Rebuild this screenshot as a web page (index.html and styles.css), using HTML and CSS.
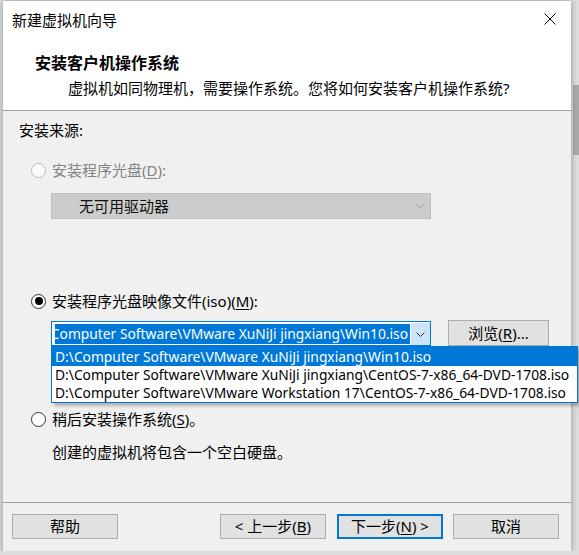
FILE: index.html
```html
<!DOCTYPE html>
<html lang="zh-CN">
  <head>
    <meta charset="UTF-8" />
    <meta name="viewport" content="width=device-width, initial-scale=1.0" />
    <link rel="stylesheet" href="styles.css">
    <title>新建虚拟机向导</title>
  </head>
  <body>
    <div class="dialog">
      <div class="titlebar">
        <span class="title">新建虚拟机向导</span>
        <svg class="close" width="12" height="12" viewBox="0 0 12 12">
          <path d="M0.5 0.5L11.5 11.5M11.5 0.5L0.5 11.5" stroke="#000" stroke-width="1" fill="none" />
        </svg>
      </div>

      <div class="header">
        <div class="heading">安装客户机操作系统</div>
        <div class="subtitle">虚拟机如同物理机，需要操作系统。您将如何安装客户机操作系统?</div>
      </div>

      <div class="content">
        <div class="group-label">安装来源:</div>

        <div class="radio-row disabled row-disc">
          <span class="radio"></span>安装程序光盘(<u>D</u>):
        </div>
        <div class="select-disabled">
          <span>无可用驱动器</span>
          <svg width="10" height="6" viewBox="0 0 10 6">
            <path d="M0.5 0.5L5 5L9.5 0.5" stroke="#a6a6a6" fill="none" />
          </svg>
        </div>

        <div class="radio-row row-iso">
          <span class="radio checked"></span>安装程序光盘映像文件(iso)(<u>M</u>):
        </div>
        <div class="combo-row">
          <div class="combo">
            <div class="combo-field">
              <span class="combo-sel">D:\Computer Software\VMware XuNiJi jingxiang\Win10.iso</span>
            </div>
            <div class="combo-btn">
              <svg width="9" height="5" viewBox="0 0 9 5">
                <path d="M0.5 0.5L4.5 4.5L8.5 0.5" stroke="#333" fill="none" />
              </svg>
            </div>
            <ul class="combo-list">
              <li class="active">D:\Computer Software\VMware XuNiJi jingxiang\Win10.iso</li>
              <li>D:\Computer Software\VMware XuNiJi jingxiang\CentOS-7-x86_64-DVD-1708.iso</li>
              <li>D:\Computer Software\VMware Workstation 17\CentOS-7-x86_64-DVD-1708.iso</li>
            </ul>
          </div>
          <button class="btn browse">浏览(<u>R</u>)...</button>
        </div>

        <div class="radio-row row-later">
          <span class="radio"></span>稍后安装操作系统(<u>S</u>)。
        </div>
        <div class="note">创建的虚拟机将包含一个空白硬盘。</div>
      </div>

      <div class="footer">
        <button class="btn">帮助</button>
        <div class="nav">
          <button class="btn">&lt; 上一步(<u>B</u>)</button>
          <button class="btn default">下一步(<u>N</u>) &gt;</button>
          <button class="btn">取消</button>
        </div>
      </div>
    </div>
  </body>
</html>
```

FILE: styles.css
```css
html {
  background: linear-gradient(#a9a9a9, #a9a9a9) 573px 85px / 6px 70px no-repeat, #dcdcdc;
}
body {
  margin: 0;
  font-family: "Noto Sans", "Noto Sans CJK SC", sans-serif;
  font-size: 15px;
  color: #000;
}
u {
  text-underline-offset: 2px;
}

.dialog {
  margin: 1px 0 0 3px;
  width: 568px;
  height: 550px;
  background-color: #f0f0f0;
  display: flex;
  flex-direction: column;
  box-shadow: 0 0 6px rgba(0, 0, 0, 0.35);
}

/* title bar + white header */
.titlebar {
  height: 38px;
  background-color: #fff;
  display: flex;
  align-items: center;
  justify-content: space-between;
  padding: 0 15px 0 9px;
}
.title {
  line-height: 20px;
}
.close {
  display: block;
  margin-top: -2px;
}
.header {
  height: 72px;
  box-sizing: border-box;
  background-color: #fff;
  border-bottom: 1px solid #a0a0a0;
  padding: 13px 0 0 32px;
}
.heading {
  font-size: 16px;
  font-weight: bold;
  line-height: 22px;
}
.subtitle {
  margin: 3px 0 0 33px;
  line-height: 22px;
}

/* body */
.content {
  padding: 9px 0 0 16px;
}
.group-label {
  line-height: 20px;
}
.radio-row {
  display: flex;
  align-items: center;
  height: 20px;
  line-height: 20px;
  margin-left: 12px;
}
.radio-row.disabled {
  color: #838383;
}
.radio {
  width: 15px;
  height: 15px;
  box-sizing: border-box;
  border: 1px solid #333;
  border-radius: 50%;
  background-color: #fff;
  margin-right: 6px;
  position: relative;
  flex-shrink: 0;
}
.radio.checked::after {
  content: '';
  position: absolute;
  inset: 2.5px;
  border-radius: 50%;
  background-color: #000;
}
.disabled .radio {
  border-color: #bcbcbc;
  background-color: #fcfcfc;
}
.row-disc {
  margin-top: 20px;
}
.row-iso {
  margin-top: 72px;
}
.row-later {
  margin-top: 63px;
}

.select-disabled {
  margin: 13px 0 0 32px;
  width: 380px;
  height: 26px;
  box-sizing: border-box;
  background-color: #cccccc;
  border: 1px solid #bfbfbf;
  display: flex;
  align-items: center;
  justify-content: space-between;
  padding: 0 5px 0 27px;
}
.select-disabled span {
  line-height: 20px;
  color: #111;
}

.combo-row {
  margin: 9px 0 0 32px;
  display: flex;
  align-items: flex-end;
  gap: 17px;
}
.combo {
  position: relative;
  width: 380px;
  height: 25px;
  box-sizing: border-box;
  border: 1px solid #0078d7;
  background-color: #fff;
  display: flex;
  align-items: flex-start;
}
.combo-field {
  flex: 1;
  height: 20px;
  margin: 2px 1px 0 3px;
  overflow: hidden;
  display: flex;
  justify-content: flex-end;
}
.combo-sel {
  flex-shrink: 0;
  white-space: nowrap;
  background-color: #0078d7;
  color: #fff;
  font-size: 13.8px;
  line-height: 20px;
  padding-right: 2px;
}
.combo-btn {
  width: 19px;
  height: 22px;
  margin-top: 1px;
  background-color: #cce4f7;
  display: flex;
  align-items: center;
  justify-content: center;
}
.combo-btn svg {
  display: block;
}
.combo-list {
  position: absolute;
  top: 24px;
  left: -1px;
  width: 527px;
  box-sizing: border-box;
  margin: 0;
  padding: 0;
  list-style: none;
  background-color: #fff;
  border: 1px solid #0078d7;
  box-shadow: 3px 3px 3px rgba(0, 0, 0, 0.25);
  font-size: 13.8px;
  z-index: 2;
}
.combo-list li {
  height: 18px;
  line-height: 18px;
  padding-left: 3px;
  white-space: nowrap;
}
.combo-list li.active {
  height: 19px;
  line-height: 19px;
  background-color: #0078d7;
  color: #fff;
}

.note {
  margin: 13px 0 0 33px;
  line-height: 20px;
}

/* buttons */
.btn {
  font-family: inherit;
  font-size: 15px;
  color: #000;
  width: 106px;
  height: 25px;
  padding: 0;
  line-height: 1;
  box-sizing: border-box;
  background-color: #e1e1e1;
  border: 1px solid #adadad;
}
.btn.default {
  border: 2px solid #0078d7;
}
.browse {
  width: 101px;
  height: 26px;
}

.footer {
  margin-top: auto;
  border-top: 1px solid #a0a0a0;
  padding: 11px 12px 12px 9px;
  display: flex;
  justify-content: space-between;
}
.nav {
  display: flex;
  gap: 11px;
}
.nav .btn + .btn + .btn {
  margin-left: -1px;
}
```
